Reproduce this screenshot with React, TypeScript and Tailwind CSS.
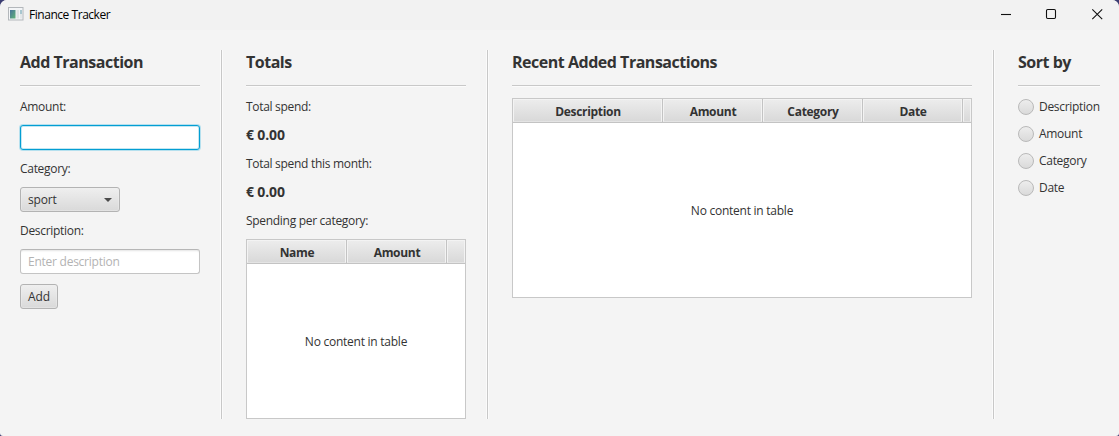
import { useState, type ReactNode } from 'react';

function Heading({ children }: { children: ReactNode }) {
  return (
    <>
      <h2 className="h-[25px] whitespace-nowrap text-[16px] leading-[25px] font-bold tracking-[-0.48px]">{children}</h2>
      <div className="h-[3px] border-t border-[#c8c8c8]">
        <div className="h-px bg-[#fbfbfb]" />
      </div>
    </>
  );
}

function Label({ children }: { children: ReactNode }) {
  return <div className="h-[17px] whitespace-nowrap leading-[17px]">{children}</div>;
}

function Total({ children }: { children: ReactNode }) {
  return <div className="h-5 whitespace-nowrap text-[14px] leading-5 font-bold tracking-[-0.15px]">{children}</div>;
}

function Divider() {
  return (
    <div className="mx-5 flex w-[6px] shrink-0">
      <div className="w-px bg-[#fbfbfb]" />
      <div className="w-px bg-[#c8c8c8]" />
      <div className="w-px bg-[#fbfbfb]" />
    </div>
  );
}

function HeaderCell({ className, children }: { className: string; children?: ReactNode }) {
  return (
    <div className={`h-6 shrink-0 border-r border-b border-[#c3c3c3] last:border-r-0 ${className}`}>
      <div className="h-full border border-[#f3f3f3] border-b-[#e4e4e4] bg-linear-to-b from-[#ececec] to-[#d9d9d9] pl-px text-center leading-[23px] font-bold tracking-[-0.3px]">
        {children}
      </div>
    </div>
  );
}

function Table({ className, children }: { className: string; children: ReactNode }) {
  return (
    <div className={`flex flex-col border border-[#c8c8c8] bg-white ${className}`}>
      <div className="flex h-6">{children}</div>
      <div className="flex flex-1 items-center justify-center pt-px leading-[17px] tracking-[-0.25px]">No content in table</div>
    </div>
  );
}

function TitleBar() {
  return (
    <header className="flex h-[30px] shrink-0 items-center bg-[#f2f2f2] pl-2 text-black">
      <svg width="16" height="14" viewBox="0 0 16 14" className="mt-[-2px]">
        <defs>
          <linearGradient id="appPane" x1="0" y1="0" x2="1" y2="1">
            <stop offset="0" stopColor="#48739b" />
            <stop offset="1" stopColor="#61b477" />
          </linearGradient>
        </defs>
        <rect x=".5" y=".5" width="14.5" height="12.5" fill="#f3f5f7" stroke="#b3b7bb" />
        <rect x="2" y="3" width="5.5" height="8.5" fill="url(#appPane)" />
        <rect x="8.5" y="3" width="2.5" height="8.5" fill="#dfe3e5" />
        <rect x="12" y="3" width="2" height="4" fill="#a8c7d0" />
        <rect x="12" y="7" width="2" height="4.5" fill="#e4e8ea" />
      </svg>
      <span className="ml-[5px] pb-px leading-4 tracking-[-0.46px]">Finance Tracker</span>
      <svg width="102" height="12" viewBox="0 0 102 12" className="mt-[-2px] mr-4 ml-auto" fill="none" stroke="#111">
        <path d="M0 6.5H10" strokeWidth="1.1" />
        <rect x="45.5" y="1.5" width="9" height="9" rx="1.2" strokeWidth="1.1" />
        <path d="M91.3 1.3L101.2 11.2M101.2 1.3L91.3 11.2" strokeWidth="1.1" />
      </svg>
    </header>
  );
}

const sortKeys = ['Description', 'Amount', 'Category', 'Date'];

export default function App() {
  const [amount, setAmount] = useState('');
  const [description, setDescription] = useState('');
  const [sort, setSort] = useState('');

  return (
    <div className="h-[436px] w-[1119px] bg-[#3b3d72]">
      <div className="flex h-full flex-col overflow-hidden rounded-t-[7px] rounded-b-[3px] bg-[#f4f4f4] font-['Open_Sans','Noto_Sans',sans-serif] text-[12px] tracking-[-0.3px] text-[#333]">
        <TitleBar />
        <main className="flex h-[389px] px-5 pt-5">
          <section className="flex w-[180px] shrink-0 flex-col items-start gap-[10px] *:shrink-0 [&>h2+div]:w-full">
            <Heading>Add Transaction</Heading>
            <Label>Amount:</Label>
            <input
              value={amount}
              onChange={(e) => setAmount(e.target.value)}
              className="h-[25px] w-full rounded-[3px] border border-[#039ed3] bg-white px-[7px] shadow-[0_0_0_1px_#b5e0ee,inset_0_0_0_1px_#c4e7f2] outline-none"
            />
            <Label>Category:</Label>
            <button className="flex h-[25px] w-[100px] items-center justify-between rounded-[3px] border border-[#b3b3b3] bg-linear-to-b from-[#efefef] to-[#d9d9d9] px-[7px] shadow-[inset_0_0_0_1px_#f0f0f066]">
              <span className="leading-[17px] tracking-[-0.15px]">sport</span>
              <svg width="8" height="4" viewBox="0 0 8 4">
                <path d="M0 0H8L4 4Z" fill="#4b4b4b" />
              </svg>
            </button>
            <Label>Description:</Label>
            <input
              value={description}
              onChange={(e) => setDescription(e.target.value)}
              placeholder="Enter description"
              className="h-[25px] w-full rounded-[3px] border border-[#c4c4c4] border-t-[#b6b6b6] bg-white px-[7px] tracking-[-0.25px] shadow-[inset_0_2px_2px_-1px_#e4e4e4] outline-none placeholder:text-[#b3b3b3]"
            />
            <button className="h-[25px] w-[38px] rounded-[3px] border border-[#b3b3b3] bg-linear-to-b from-[#efefef] to-[#d9d9d9] leading-[23px] tracking-[-0.15px] shadow-[inset_0_0_0_1px_#f0f0f066]">
              Add
            </button>
          </section>
          <Divider />
          <section className="flex w-[220px] shrink-0 flex-col gap-[10px]">
            <Heading>Totals</Heading>
            <Label>Total spend:</Label>
            <Total>€ 0.00</Total>
            <Label>Total spend this month:</Label>
            <Total>€ 0.00</Total>
            <Label>Spending per category:</Label>
            <Table className="h-[180px]">
              <HeaderCell className="w-[100px]">Name</HeaderCell>
              <HeaderCell className="w-[100px]">Amount</HeaderCell>
              <HeaderCell className="w-[18px]" />
            </Table>
          </section>
          <Divider />
          <section className="flex w-[460px] shrink-0 flex-col gap-[10px]">
            <Heading>Recent Added Transactions</Heading>
            <Table className="h-[200px]">
              <HeaderCell className="w-[150px]">Description</HeaderCell>
              <HeaderCell className="w-[100px]">Amount</HeaderCell>
              <HeaderCell className="w-[100px]">Category</HeaderCell>
              <HeaderCell className="w-[100px]">Date</HeaderCell>
              <HeaderCell className="w-2" />
            </Table>
          </section>
          <Divider />
          <section className="flex w-[82px] shrink-0 flex-col gap-[10px]">
            <Heading>Sort by</Heading>
            {sortKeys.map((key) => (
              <label key={key} className="flex h-[17px] items-center gap-[5px] whitespace-nowrap">
                <input
                  type="radio"
                  name="sort"
                  checked={sort === key}
                  onChange={() => setSort(key)}
                  className="size-4 shrink-0 appearance-none rounded-full border border-[#b9b9b9] bg-linear-to-b from-[#ededed] to-[#dadada] checked:bg-[#666]"
                />
                <span className="leading-[17px]">{key}</span>
              </label>
            ))}
          </section>
        </main>
      </div>
    </div>
  );
}
